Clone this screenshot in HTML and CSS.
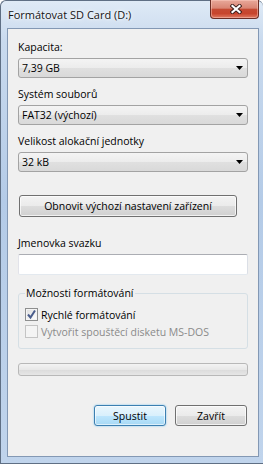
FILE: index.html
```html
<!DOCTYPE html>
<html lang="cs">

<head>
    <meta charset="UTF-8">
    <meta name="viewport" content="width=device-width, initial-scale=1.0">
    <title>Formátovat SD Card (D:)</title>
    <link rel="stylesheet" href="styles.css">
</head>

<body>
<div class="window">
    <div class="titlebar">
        <span class="title">Formátovat SD Card (D:)</span>
        <div class="close">
            <svg width="12" height="10" viewBox="0 0 12 10">
                <path d="M2.5 2 L9.5 8 M9.5 2 L2.5 8" stroke="#3a1e1b" stroke-width="4" stroke-linecap="square"/>
                <path d="M2.5 2 L9.5 8 M9.5 2 L2.5 8" stroke="#ffffff" stroke-width="2.2" stroke-linecap="square"/>
            </svg>
        </div>
    </div>

    <div class="client">
        <div class="lbl first">Kapacita:</div>
        <div class="combo">
            <span>7,39 GB</span>
            <svg class="arrow" width="7" height="4" viewBox="0 0 7 4"><path d="M0 0 H7 L3.5 4 Z" fill="#000"/></svg>
        </div>

        <div class="lbl">Systém souborů</div>
        <div class="combo">
            <span>FAT32 (výchozí)</span>
            <svg class="arrow" width="7" height="4" viewBox="0 0 7 4"><path d="M0 0 H7 L3.5 4 Z" fill="#000"/></svg>
        </div>

        <div class="lbl">Velikost alokační jednotky</div>
        <div class="combo">
            <span>32 kB</span>
            <svg class="arrow" width="7" height="4" viewBox="0 0 7 4"><path d="M0 0 H7 L3.5 4 Z" fill="#000"/></svg>
        </div>

        <div class="btn restore">Obnovit výchozí nastavení zařízení</div>

        <div class="lbl gap">Jmenovka svazku</div>
        <div class="textbox"></div>

        <fieldset class="group">
            <legend>Možnosti formátování</legend>
            <div class="check">
                <span class="box">
                    <svg width="11" height="11" viewBox="0 0 11 11"><path d="M2 5.5 L4.5 8.5 L9 1.5" fill="none" stroke="#4a5d8c" stroke-width="2"/></svg>
                </span>
                Rychlé formátování
            </div>
            <div class="check disabled">
                <span class="box"></span>
                Vytvořit spouštěcí disketu MS-DOS
            </div>
        </fieldset>

        <div class="progress"></div>

        <div class="actions">
            <div class="btn default">Spustit</div>
            <div class="btn">Zavřít</div>
        </div>
    </div>
</div>
</body>

</html>
```

FILE: styles.css
```css
* {
    padding: 0;
    margin: 0;
    box-sizing: border-box;
}

body {
    width: 263px;
    height: 464px;
    overflow: hidden;
    font: 10.5px "Open Sans", "Noto Sans", sans-serif;
    color: #000;
    background: #fff;
}

.window {
    height: 464px;
    display: flex;
    flex-direction: column;
    padding: 0 4px 6px 6px;
    border: 1px solid #5f6f84;
    border-right: none;
    border-radius: 6px 6px 0 0;
    background: linear-gradient(to bottom, #dfeaf6 0, #c9daee 40px, #b4cbe7 200px, #c0d4ec 100%);
}

.titlebar {
    height: 27px;
    display: flex;
    align-items: flex-start;
    justify-content: space-between;
}

.title {
    margin: 7px 0 0 1px;
    font-size: 11px;
    line-height: 14px;
    color: #141414;
    text-shadow: 0 0 6px #fff, 0 0 3px #fff;
}

.close {
    width: 49px;
    height: 19px;
    margin-top: -1px;
    display: flex;
    align-items: center;
    justify-content: center;
    padding-left: 2px;
    border: 1px solid #6b2d25;
    border-top: none;
    border-radius: 0 0 4px 4px;
    background: linear-gradient(to bottom, #e8a89a 0, #d98574 45%, #c54a33 52%, #c7452d 75%, #df7a62 100%);
    box-shadow: inset 0 0 0 1px rgba(255, 210, 200, 0.45);
}

.client {
    flex: 1;
    display: flex;
    flex-direction: column;
    padding: 11px 10px 0 10px;
    border: 1px solid #8398b4;
    background: #f0f0f0;
}

.lbl {
    height: 15px;
    line-height: 15px;
    margin-top: 9px;
    margin-bottom: 3px;
}

.lbl.first {
    margin-top: 0;
}

.lbl.gap {
    margin-top: 19px;
}

.combo {
    height: 20px;
    display: flex;
    align-items: center;
    justify-content: space-between;
    padding: 0 4px 0 3px;
    border: 1px solid #a3a3a3;
    border-radius: 3px;
    background: linear-gradient(to bottom, #f4f4f4 0, #ececec 50%, #e0e0e0 51%, #d9d9d9 100%);
}

.btn {
    height: 21px;
    display: flex;
    align-items: center;
    justify-content: center;
    border: 1px solid #707070;
    border-radius: 3px;
    background: linear-gradient(to bottom, #f3f3f3 0, #ebebeb 50%, #dddddd 51%, #d0d0d0 100%);
    box-shadow: inset 0 0 0 1px rgba(255, 255, 255, 0.7);
}

.restore {
    height: 22px;
    margin: 23px 11px 0 1px;
}

.textbox {
    height: 21px;
    border: 1px solid;
    border-color: #abadb3 #dbdfe6 #e3e9ef #e2e3ea;
    border-radius: 2px;
    background: #fff;
}

.group {
    margin-top: 11px;
    padding: 6px 6px 8px 6px;
    border: 1px solid #d5dfe5;
    border-radius: 3px;
}

.group legend {
    padding: 0 1px;
    line-height: 14px;
}

.check {
    height: 17px;
    display: flex;
    align-items: center;
    gap: 3px;
}

.box {
    width: 13px;
    height: 13px;
    display: flex;
    align-items: center;
    justify-content: center;
    border: 1px solid #8e8f8f;
    background: linear-gradient(135deg, #dcdcdc 0, #f6f6f6 70%, #ffffff 100%);
    box-shadow: inset 0 0 0 1px #f4f4f4;
}

.check.disabled {
    color: #8a8a8a;
}

.check.disabled .box {
    border-color: #c4c4c4;
    background: #f4f4f4;
    box-shadow: none;
}

.progress {
    height: 13px;
    margin-top: 14px;
    border: 1px solid #b8b8b8;
    border-radius: 3px;
    background: linear-gradient(to bottom, #f3f3f3 0, #e8e8e8 50%, #dbdbdb 51%, #e6e6e6 100%);
}

.actions {
    display: flex;
    justify-content: flex-end;
    gap: 9px;
    margin: 29px 1px 0 0;
}

.actions .btn {
    width: 72px;
}

.btn.default {
    border-color: #3c7fb1;
    background: linear-gradient(to bottom, #eaf6fd 0, #d9f0fc 50%, #bee6fd 51%, #a7d9f5 100%);
    box-shadow: inset 0 0 0 1px rgba(255, 255, 255, 0.6), 0 0 2px #6fc0ef;
}
```
